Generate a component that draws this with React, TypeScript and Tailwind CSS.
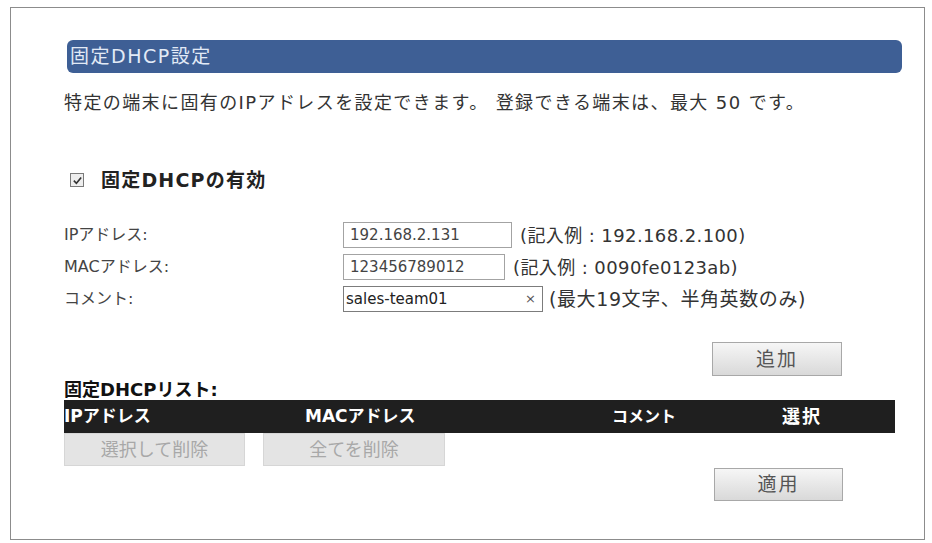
import React from "react";

const App = () => {
  return (
    <div className="bg-white w-[932px] h-[543px] overflow-hidden font-['DejaVu_Sans','Noto_Sans_CJK_JP',sans-serif]">
      <div className="ml-[10px] mt-[7px] w-[915px] h-[533px] border border-[#8c8c8c] pl-[53px] pt-[32px]">
        {/* title */}
        <div className="ml-[3px] w-[835px] h-[33px] rounded-[6px] bg-[#3e5f95] flex items-center pl-[3px] text-[19px] tracking-[1.5px] text-[#e2eaf6]">
          固定DHCP設定
        </div>

        <div className="mt-[18px] h-[24px] leading-[24px] text-[18px] tracking-[1.4px] text-[#333] whitespace-nowrap">
          特定の端末に固有のIPアドレスを設定できます。 登録できる端末は、最大 50 です。
        </div>

        {/* enable */}
        <div className="mt-[53px] h-[24px] flex items-center">
          <span className="ml-[6px] w-[14px] h-[14px] shrink-0 border border-[#7a7a7a] bg-[#eeeeee] flex items-center justify-center">
            <svg viewBox="0 0 12 12" className="w-[11px] h-[11px]">
              <path d="M2 6.2 L4.8 9 L10 2.8" fill="none" stroke="#333" strokeWidth="1.8" />
            </svg>
          </span>
          <span className="ml-[17px] text-[19px] tracking-[1.2px] font-bold text-[#222]">固定DHCPの有効</span>
        </div>

        {/* form */}
        <div className="mt-[30px] flex flex-col gap-[6px]">
          <div className="h-[26px] flex items-center">
            <span className="w-[279px] text-[16px] text-[#444]">IPアドレス:</span>
            <input
              readOnly
              value="192.168.2.131"
              className="w-[169px] h-[26px] border border-[#a3a3a3] px-[6px] text-[15px] text-[#444] outline-none"
            />
            <span className="ml-[8px] text-[18px] tracking-[0.4px] text-[#333]">(記入例 : 192.168.2.100)</span>
          </div>
          <div className="h-[26px] flex items-center">
            <span className="w-[279px] text-[16px] text-[#444]">MACアドレス:</span>
            <input
              readOnly
              value="123456789012"
              className="w-[162px] h-[26px] border border-[#a3a3a3] px-[6px] text-[15px] text-[#444] outline-none"
            />
            <span className="ml-[8px] text-[18px] tracking-[0.4px] text-[#333]">(記入例 : 0090fe0123ab)</span>
          </div>
          <div className="h-[26px] flex items-center">
            <span className="w-[279px] text-[16px] text-[#444]">コメント:</span>
            <div className="w-[200px] h-[26px] border border-[#7c7c7c] flex items-center justify-between pl-[2px] pr-[6px]">
              <span className="text-[15px] text-[#222]">sales-team01</span>
              <span className="text-[13px] text-[#555]">×</span>
            </div>
            <span className="ml-[6px] text-[19px] tracking-[0.6px] text-[#333]">(最大19文字、半角英数のみ)</span>
          </div>
        </div>

        <div className="mt-[30px] flex">
          <button className="ml-[648px] w-[130px] h-[34px] border border-[#a8a8a8] bg-gradient-to-b from-[#f6f6f6] to-[#d9d9d9] text-[19px] tracking-[2px] text-[#555]">
            追加
          </button>
        </div>

        {/* list */}
        <div className="mt-[3px] h-[21px] leading-[21px] text-[18px] font-bold text-[#111]">固定DHCPリスト:</div>
        <div className="w-[831px] h-[33px] bg-[#1f1f1f] grid grid-cols-[241px_307px_170px_1fr] items-center text-[17px] font-bold text-white">
          <span>IPアドレス</span>
          <span>MACアドレス</span>
          <span className="text-[16px]">コメント</span>
          <span className="text-[18px] tracking-[2px]">選択</span>
        </div>
        <div className="flex gap-[18px]">
          <button className="w-[181px] h-[33px] bg-[#e4e4e4] border border-[#d6d6d6] text-[18px] text-[#a8a8a8]">
            選択して削除
          </button>
          <button className="w-[182px] h-[33px] bg-[#e4e4e4] border border-[#d6d6d6] text-[18px] text-[#a8a8a8]">
            全てを削除
          </button>
        </div>

        <div className="mt-[2px] flex">
          <button className="ml-[650px] w-[129px] h-[33px] border border-[#a8a8a8] bg-gradient-to-b from-[#f6f6f6] to-[#d9d9d9] text-[19px] tracking-[2px] text-[#555]">
            適用
          </button>
        </div>
      </div>
    </div>
  );
};

export default App;
